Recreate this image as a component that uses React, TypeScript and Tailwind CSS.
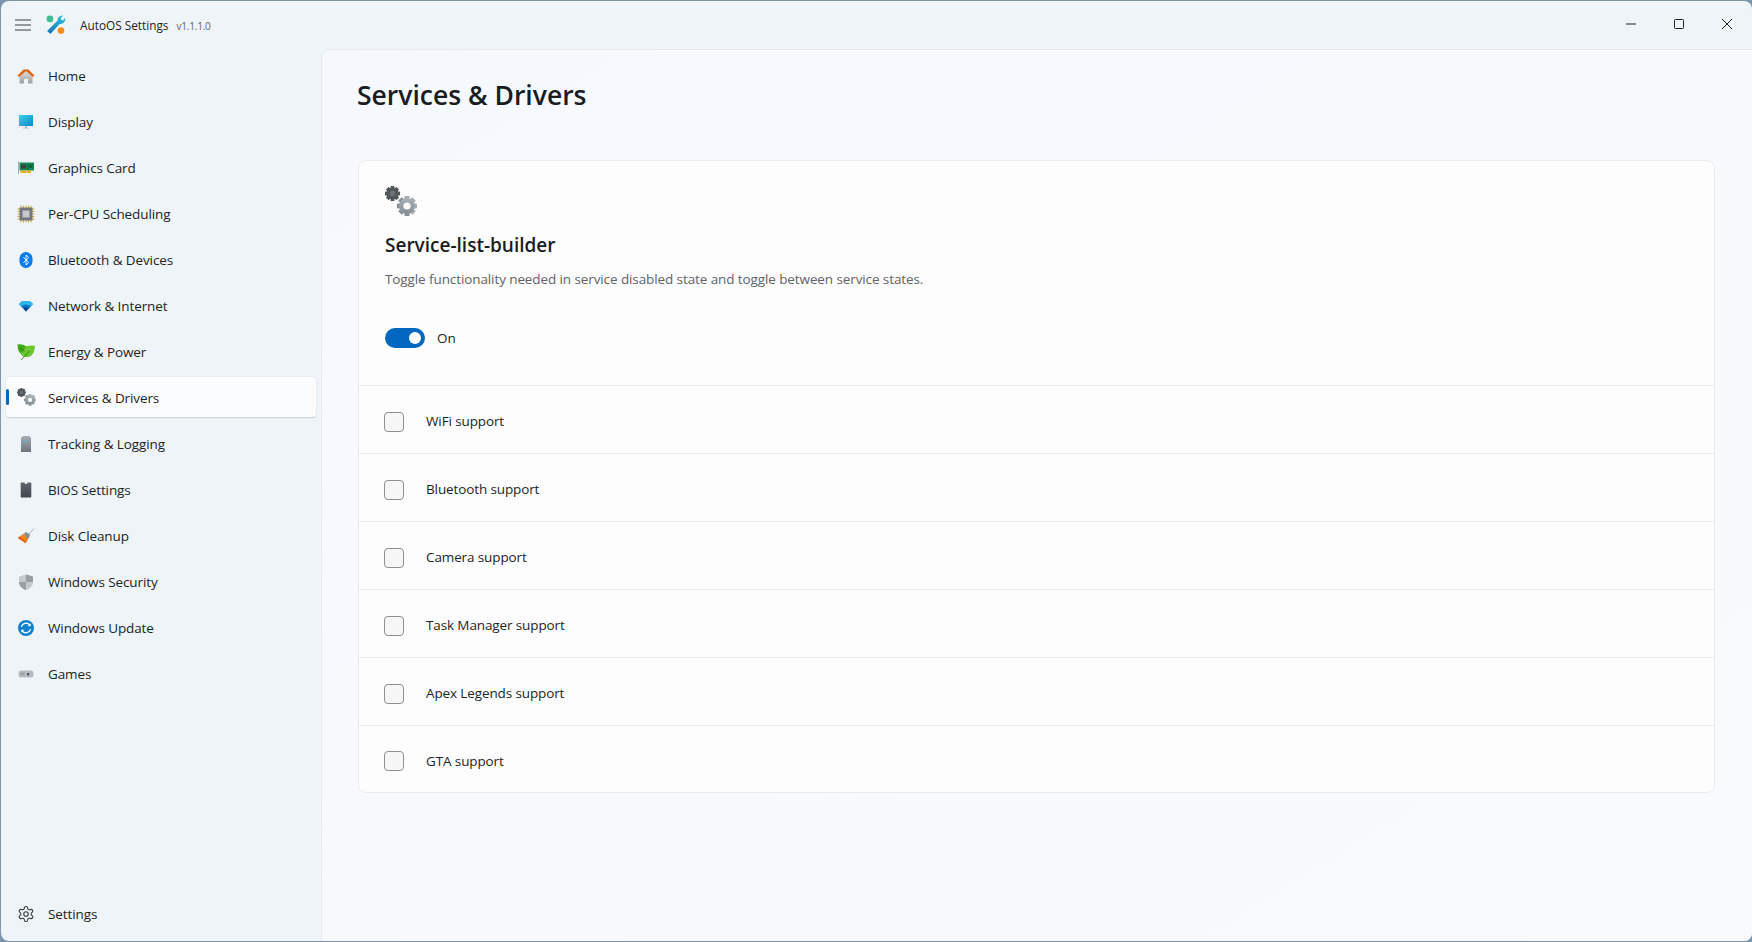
import React from "react";

const Defs = () => (
  <svg width="0" height="0" className="absolute">
    <defs>
      <linearGradient id="gGrey" x1="0" y1="0" x2="0" y2="1"><stop offset="0" stopColor="#a8b0b8" /><stop offset="1" stopColor="#858d95" /></linearGradient>
      <linearGradient id="gDark" x1="0" y1="0" x2="0" y2="1"><stop offset="0" stopColor="#5e666d" /><stop offset="1" stopColor="#41474d" /></linearGradient>
      <linearGradient id="gHome" x1="0" y1="0" x2="0" y2="1"><stop offset="0" stopColor="#e4e4e4" /><stop offset="1" stopColor="#a0a0a0" /></linearGradient>
      <linearGradient id="gScreen" x1="0" y1="0" x2="1" y2="1"><stop offset="0" stopColor="#35d4e8" /><stop offset="1" stopColor="#0f86c8" /></linearGradient>
      <linearGradient id="gTrack" x1="0" y1="0" x2="0" y2="1"><stop offset="0" stopColor="#a4adb3" /><stop offset="1" stopColor="#6d757c" /></linearGradient>
      <linearGradient id="gWrench" x1="0" y1="1" x2="1" y2="0"><stop offset="0" stopColor="#1570b8" /><stop offset="1" stopColor="#2cc4d8" /></linearGradient>
    </defs>
  </svg>
);

const Gear = ({ cx, cy, r, fill, hole }: { cx: number; cy: number; r: number; fill: string; hole: string }) => (
  <g>
    {[0, 45, 90, 135].map((a) => (
      <rect key={a} x={cx - r * 0.26} y={cy - r} width={r * 0.52} height={r * 2} rx={r * 0.08} fill={fill} transform={`rotate(${a} ${cx} ${cy})`} />
    ))}
    <circle cx={cx} cy={cy} r={r * 0.78} fill={fill} />
    <circle cx={cx} cy={cy} r={r * 0.36} fill={hole} />
  </g>
);

const GearsIcon = ({ size = 20, hole = "#fbfcfe" }: { size?: number; hole?: string }) => (
  <svg width={size} height={size} viewBox="0 0 32 32">
    <Gear cx={7.5} cy={7.5} r={7.5} fill="#4f565c" hole="#6b7278" />
    <Gear cx={22} cy={20} r={10} fill="url(#gGrey)" hole={hole} />
  </svg>
);

const icons: Record<string, React.ReactNode> = {
  home: (
    <svg width="18" height="18" viewBox="0 0 18 18">
      <path d="M2.500 8L9 2.500 15.500 8V16.500H11V12H7V16.500H2.500z" fill="url(#gHome)" />
      <path d="M.5 8.500L6.500 2.500H11.500L17.500 8.500 16 10 9 4 2 10z" fill="#e0660c" />
    </svg>
  ),
  display: (
    <svg width="18" height="18" viewBox="0 0 18 18">
      <rect x="2" y="2" width="14" height="11" fill="url(#gScreen)" />
      <rect x="8" y="13" width="2" height="2" fill="#a8b3bc" />
      <rect x="6" y="14.600" width="6" height="1" fill="#c2cad0" />
    </svg>
  ),
  gpu: (
    <svg width="18" height="18" viewBox="0 0 18 18">
      <rect x="1" y="2.500" width="1" height="12.500" fill="#a3a9ad" />
      <rect x="2.500" y="3.500" width="14.500" height="8" fill="#128a52" />
      <rect x="4" y="5.500" width="5" height="4" fill="#3b3f42" />
      <path d="M10.500 5.500h1v1h-1zM12.500 5.500h1v1h-1zM14.500 5.500h1v1h-1zM10.500 7.500h1v1h-1zM12.500 7.500h3v1h-3zM10.500 9.500h1v1h-1z" fill="#1d2a25" />
      <rect x="3.500" y="11.500" width="6" height="2.500" fill="#e8ad1d" />
      <rect x="10" y="11.500" width="4" height="2.500" fill="#e8ad1d" />
    </svg>
  ),
  cpu: (
    <svg width="18" height="18" viewBox="0 0 18 18">
      <path d="M4 .5v17M6.500 .5v17M9 .5v17M11.500 .5v17M14 .5v17M.5 4h17M.5 6.500h17M.5 9h17M.5 11.500h17M.5 14h17" stroke="#d39c1e" strokeWidth="0.9" />
      <rect x="2.500" y="2.500" width="13" height="13" fill="#74787d" />
      <rect x="5.500" y="5.500" width="7" height="7" fill="#c6c8ca" />
    </svg>
  ),
  bt: (
    <svg width="18" height="18" viewBox="0 0 18 18">
      <rect x="2.500" y="1" width="13" height="16" rx="6.500" fill="#0a7bf0" />
      <path d="M6.300 6l5.400 5.500L9 14V4l2.700 2.500L6.300 12" fill="none" stroke="#fff" strokeWidth="0.9" />
    </svg>
  ),
  wifi: (
    <svg width="18" height="18" viewBox="0 0 18 18">
      <path d="M1.500 7L5 4h8l3.500 3L9 14.500z" fill="#2fb7ec" />
      <path d="M4 9Q9 6 14 9L9 14.500z" fill="#1474c8" />
      <path d="M6.500 11Q9 9.500 11.500 11L9 14.500z" fill="#0d3f86" />
    </svg>
  ),
  leaf: (
    <svg width="18" height="18" viewBox="0 0 18 18">
      <path d="M.5 1.500C4 1 7 1.500 9 3.500 11.500 2.500 15 2.500 17.500 3 17.500 8 16 13.500 10 14 7 14.500 5 12.500 4 11 1.500 9 .5 6 .5 1.500z" fill="#3fae18" />
      <path d="M9 3.500C11.500 2.500 15 2.500 17.500 3 17.500 8 16 13.500 10 14 7 14.500 5 12.500 4 11z" fill="#6cc82e" />
      <path d="M4 17L12.500 8M3 4.500L7.500 8.500" stroke="#1c5d12" strokeWidth="0.7" fill="none" />
    </svg>
  ),
  gears: <GearsIcon size={19} />,
  track: (
    <svg width="18" height="18" viewBox="0 0 18 18">
      <path d="M4 3L6 1h6l2 2V17H4z" fill="url(#gTrack)" />
      <rect x="8.200" y="5" width="1.500" height="1.500" fill="#2fd0de" />
    </svg>
  ),
  bios: (
    <svg width="18" height="18" viewBox="0 0 18 18">
      <path d="M4 1.500h3.500a1.500 1.500 0 0 0 3 0H14V16.500H4z" fill="url(#gDark)" />
      <path d="M3.500 2.500v13.500M14.500 2.500v13.500" stroke="#8f959a" strokeWidth="1" strokeDasharray="1 1" />
    </svg>
  ),
  clean: (
    <svg width="18" height="18" viewBox="0 0 18 18">
      <path d="M12 7L17 1.500" stroke="#8d949a" strokeWidth="0.7" />
      <path d="M7 6.500L9 5l4 2.500-1 3.500-3 2z" fill="#878d93" />
      <path d="M6.500 6.500L11 12.800 8.500 16 1 11z" fill="#f5821f" />
      <path d="M1 11l7.500 5 .8-1-7-5.500z" fill="#e05a10" />
    </svg>
  ),
  shield: (
    <svg width="18" height="18" viewBox="0 0 18 18">
      <path d="M9 1.500L16 3.500V9c0 4-3 6.500-7 8C5 15.500 2 13 2 9V3.500z" fill="#c4c9cd" />
      <path d="M9 1.500V17c-4-1.500-7-4-7-8h7zM9 9h7c0 0 0-5.500 0-5.500L9 1.500z" fill="#989fa5" />
    </svg>
  ),
  update: (
    <svg width="18" height="18" viewBox="0 0 18 18">
      <circle cx="9" cy="9" r="8" fill="#1182cf" />
      <path d="M4.500 8A4.600 4.600 0 0 1 12.800 6.200M13.500 10A4.600 4.600 0 0 1 5.200 11.800" fill="none" stroke="#fff" strokeWidth="1.200" />
      <path d="M13.700 4.200v3h-3zM4.300 13.800v-3h3z" fill="#fff" />
    </svg>
  ),
  games: (
    <svg width="18" height="18" viewBox="0 0 18 18">
      <rect x="1.500" y="5.500" width="15" height="7" rx="2.500" fill="#b6bcc2" />
      <rect x="3.500" y="7.500" width="4" height="3" fill="#9aa1a7" />
      <path d="M10.500 8h2l-1 2.500h-1.500z" fill="#3c4247" />
    </svg>
  ),
};

const nav: [string, string][] = [
  ["home", "Home"],
  ["display", "Display"],
  ["gpu", "Graphics Card"],
  ["cpu", "Per-CPU Scheduling"],
  ["bt", "Bluetooth & Devices"],
  ["wifi", "Network & Internet"],
  ["leaf", "Energy & Power"],
  ["gears", "Services & Drivers"],
  ["track", "Tracking & Logging"],
  ["bios", "BIOS Settings"],
  ["clean", "Disk Cleanup"],
  ["shield", "Windows Security"],
  ["update", "Windows Update"],
  ["games", "Games"],
];

const rows: [string, string][] = [
  ["WiFi support", "h-[68px]"],
  ["Bluetooth support", "h-[68px]"],
  ["Camera support", "h-[68px]"],
  ["Task Manager support", "h-[68px]"],
  ["Apex Legends support", "h-[68px]"],
  ["GTA support", "h-[67px]"],
];

function NavItem({ icon, label, active }: { icon: React.ReactNode; label: string; active?: boolean }) {
  return (
    <div
      className={`relative flex h-[41px] shrink-0 items-center rounded-[4px] pl-[10px] ${
        active ? "border-b border-b-[#cfd4da] bg-[#fbfcfe] shadow-[0_0_0_1px_#e9edf2]" : ""
      }`}
    >
      {active && <div className="absolute left-0 top-[12px] h-[16px] w-[3px] rounded-[2px] bg-[#0067c0]" />}
      <div className="flex w-[20px] items-center justify-center">{icon}</div>
      <span className="ml-[12px] pt-[2px] text-[13.5px] tracking-[-0.1px] text-[#1c1f23]">{label}</span>
    </div>
  );
}

export default function App() {
  return (
    <div className="h-[942px] w-[1752px] overflow-hidden bg-[#7b95ad]" style={{ fontFamily: '"Open Sans", "Noto Sans", sans-serif' }}>
      <Defs />
      <div className="ml-[1px] mt-[1px] flex h-[940px] w-[1751px] flex-col overflow-hidden rounded-[8px] bg-[#eff4f9]">
        <header className="flex h-[48px] shrink-0 items-center">
          <svg className="ml-[14px]" width="16" height="12" viewBox="0 0 16 12">
            <path d="M0 1h16M0 6h16M0 11h16" stroke="#3a3d40" strokeWidth="1" />
          </svg>
          <svg className="ml-[15px]" width="20" height="20" viewBox="0 0 18 18">
            <circle cx="3.500" cy="3.500" r="3" fill="#3fbf8f" />
            <circle cx="13.500" cy="14" r="3" fill="#f58a1f" />
            <path d="M1 14.500L10.500 5C10 2.500 12.500 .5 15.500 .5L13 3.200 14.800 5.200 17.300 2.800C18 6 15 8.800 12.500 7.800L4 17z" fill="url(#gWrench)" />
          </svg>
          <span className="ml-[14px] mt-[2px] text-[11.800px] text-[#1c1f23]">AutoOS Settings</span>
          <span className="ml-[8px] mt-[2px] text-[10px] tracking-[-0.2px] text-[#5f6368]">v1.1.1.0</span>
          <div className="-mt-[2px] ml-auto flex items-center gap-[38px] pr-[20px]">
            <svg width="10" height="10" viewBox="0 0 10 10"><path d="M0 5h10" stroke="#1c1f23" /></svg>
            <svg width="10" height="10" viewBox="0 0 10 10"><rect x=".5" y=".5" width="9" height="9" rx="1" fill="none" stroke="#1c1f23" /></svg>
            <svg width="10" height="10" viewBox="0 0 10 10"><path d="M0 0l10 10M10 0L0 10" stroke="#1c1f23" /></svg>
          </div>
        </header>
        <div className="flex min-h-0 flex-1">
          <aside className="flex w-[320px] shrink-0 flex-col pb-[7px] pl-[5px] pt-[6px]">
            <div className="flex w-[310px] flex-col gap-[5px]">
              {nav.map(([k, l]) => (
                <NavItem key={l} icon={icons[k]} label={l} active={l === "Services & Drivers"} />
              ))}
            </div>
            <div className="mt-auto w-[310px]">
              <NavItem
                icon={
                  <svg width="18" height="18" viewBox="0 0 24 24" fill="none" stroke="#3a3d40" strokeWidth="1.500" strokeLinecap="round" strokeLinejoin="round">
                    <path d="M12.220 2h-.440a2 2 0 0 0-2 2v.180a2 2 0 0 1-1 1.730l-.430.250a2 2 0 0 1-2 0l-.150-.080a2 2 0 0 0-2.730.730l-.220.380a2 2 0 0 0 .730 2.730l.150.100a2 2 0 0 1 1 1.720v.510a2 2 0 0 1-1 1.740l-.150.090a2 2 0 0 0-.730 2.730l.220.380a2 2 0 0 0 2.730.730l.150-.080a2 2 0 0 1 2 0l.430.250a2 2 0 0 1 1 1.730V20a2 2 0 0 0 2 2h.440a2 2 0 0 0 2-2v-.180a2 2 0 0 1 1-1.730l.430-.250a2 2 0 0 1 2 0l.150.080a2 2 0 0 0 2.730-.730l.220-.390a2 2 0 0 0-.730-2.730l-.150-.080a2 2 0 0 1-1-1.740v-.500a2 2 0 0 1 1-1.740l.150-.090a2 2 0 0 0 .730-2.730l-.220-.380a2 2 0 0 0-2.730-.730l-.150.080a2 2 0 0 1-2 0l-.430-.250a2 2 0 0 1-1-1.730V4a2 2 0 0 0-2-2z" />
                    <circle cx="12" cy="12" r="3" />
                  </svg>
                }
                label="Settings"
              />
            </div>
          </aside>
          <main className="min-w-0 flex-1 rounded-tl-[8px] border-l border-t border-[#e6eaef] bg-gradient-to-br from-[#f5f9fd] to-[#f9fafc] pl-[36px] pr-[37px]">
            <h1 className="flex h-[94px] items-center pb-[3px] -ml-[1px] text-[26.500px] font-semibold leading-none text-[#1a1c1f]">Services &amp; Drivers</h1>
            <section className="mt-[16px] overflow-hidden rounded-[8px] border border-[#e8ecf0] bg-[#fdfdfe]">
              <div className="h-[224px] pl-[26px] pt-[25px]">
                <GearsIcon size={32} hole="#fdfdfe" />
                <div className="mt-[13px] text-[19px] font-semibold leading-[28px] text-[#1a1c1f]">Service-list-builder</div>
                <div className="mt-[10px] text-[13.500px] leading-[20px] tracking-[-0.1px] text-[#5f6368]">
                  Toggle functionality needed in service disabled state and toggle between service states.
                </div>
                <div className="mt-[39px] flex items-center">
                  <div className="relative h-[20px] w-[40px] rounded-full bg-[#0067c0]">
                    <div className="absolute right-[4px] top-[4px] h-[12px] w-[12px] rounded-full bg-white" />
                  </div>
                  <span className="ml-[12px] text-[13.500px] text-[#1c1f23]">On</span>
                </div>
              </div>
              {rows.map(([label, h]) => (
                <div key={label} className={`flex items-center border-t border-[#e8ecf0] pl-[25px] pt-[4px] ${h}`}>
                  <div className="h-[20px] w-[20px] rounded-[4px] border border-[#8d8f92] bg-[#f7f7f7]" />
                  <span className="ml-[22px] text-[13.500px] tracking-[-0.12px] text-[#1c1f23]">{label}</span>
                </div>
              ))}
            </section>
          </main>
        </div>
      </div>
    </div>
  );
}
